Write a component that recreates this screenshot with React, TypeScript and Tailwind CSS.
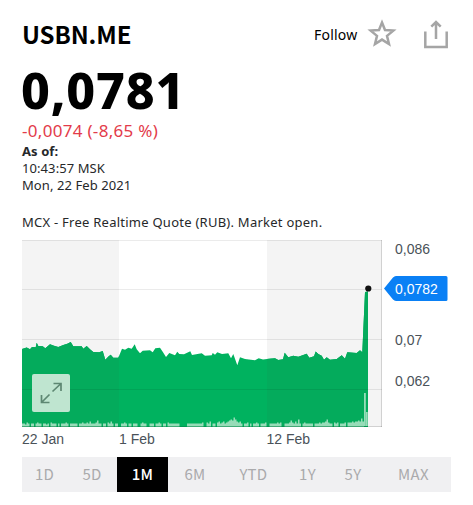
const ranges = [
  { label: '1D', style: 'w-[45px]' },
  { label: '5D', style: 'w-[50px]' },
  { label: '1M', style: 'w-[51px]' },
  { label: '6M', style: 'w-[54px]' },
  { label: 'YTD', style: 'w-[63px]' },
  { label: '1Y', style: 'w-[45px]' },
  { label: '5Y', style: 'w-[46px]' },
  { label: 'MAX', style: 'w-[75px]' },
];

const outline =
  '22,349 26.7,347.5 30,349.3 32,347 35.7,347.3 36.7,342.7 38.3,346 42.7,346.3 45.3,348.3 50,344.3 54,345.7 58.3,347 63.3,345 67.3,343.7 70.7,342 73.3,346.3 81.7,346.3 83.3,348.7 86.7,346 90,349.3 93.3,352 99.3,352.3 102.7,351 105.3,359.7 108.7,356.3 110.7,354.7 113.3,357.7 118.3,357.7 122,348.7 125,349.7 128.3,347.7 131.7,348.7 134.7,344.3 136.7,349.3 140,353.3 142.7,350.7 150,350.3 152.7,352.3 155.3,348.3 160,347.7 162.7,351.7 166,357 169.3,353 175,355.3 177.3,351.7 179.3,354 184,354.3 190.3,351.3 192,355 201.7,353.3 205,355.7 211.7,355.3 212.7,353 215,354.7 217.3,352.3 222,354 228.3,353.3 231,358.3 233.3,354 237.3,365.3 240,357.3 245,359 255,360.3 258.7,358.3 263,359.5 269,358.7 275,358.3 278.3,360 283,359.3 284.7,352.7 288.3,357.3 293.3,355.7 298.3,356.7 306.7,353.7 309.3,357.7 314,356.3 315.7,351.5 318.3,354 321.7,355.7 324,359.7 326.7,357.3 330,359.7 336.7,359 341.7,355.3 345,358.7 347.3,352.3 356.7,353 360,350.3 362.3,352.3 365,292 368,291.5';

// trading volume, one bar every 1.5px
const volume = [
  3, 3, 2, 4, 3, 0, 3, 3, 0, 3, 4, 3, 3, 0, 3, 3, 2, 3, 0, 4, 3, 3, 3, 0, 3, 0, 3, 3, 3, 4, 3, 0, 3, 3, 3, 3, 3, 0,
  3, 3, 4, 3, 3, 4, 3, 5, 3, 3, 3, 4, 6, 3, 3, 0, 3, 3, 0, 4, 3, 5, 3, 0, 3, 3, 0, 0, 3, 3, 4, 3, 0, 3, 3, 0, 3, 3,
  3, 0, 0, 3, 4, 3, 3, 0, 0, 3, 3, 3, 0, 3, 3, 4, 3, 0, 3, 3, 0, 4, 3, 3, 3, 3, 3, 3, 3, 0, 0, 0, 0, 0, 3, 3, 3, 3,
  3, 3, 3, 3, 3, 3, 4, 0, 0, 4, 3, 5, 0, 3, 3, 0, 4, 5, 3, 4, 5, 3, 4, 5, 6, 7, 6, 9, 7, 5, 4, 5, 3, 0, 3, 3, 4, 0,
  3, 0, 3, 3, 4, 3, 0, 3, 3, 3, 4, 0, 0, 3, 3, 3, 3, 3, 4, 3, 4, 0, 0, 3, 3, 3, 4, 6, 4, 3, 5, 3, 7, 3, 0, 3, 4, 3,
  3, 3, 3, 3, 0, 3, 3, 3, 4, 3, 4, 4, 5, 7, 4, 3, 3, 0, 4, 3, 4, 0, 3, 3, 3, 4, 0, 4, 4, 4, 5, 4, 5, 5, 6, 5, 8, 5,
];

const volumePath = 'M22 426.5' + volume.map((v) => `V${426.5 - v}h1.5`).join('') + 'V426.5Z';

function Chart() {
  return (
    <svg
      viewBox="22 236 440 214"
      className="block h-[214px] w-[440px] font-['Liberation_Sans',sans-serif]"
      fontSize="14"
      fill="#4a5259"
    >
      <clipPath id="area">
        <polygon points={`22,427 ${outline} 368,427`} />
      </clipPath>
      <rect x="22" y="240" width="97" height="187" fill="#f4f4f4" />
      <rect x="267" y="240" width="115" height="187" fill="#f4f4f4" />
      <g clipPath="url(#area)">
        <rect x="22" y="240" width="360" height="187" fill="#00b25f" />
        <rect x="22" y="240" width="97" height="187" fill="#04ab5c" />
        <rect x="267" y="240" width="115" height="187" fill="#04ab5c" />
      </g>
      <g fill="#97dcb8">
        <path d={volumePath} />
        <rect x="364" y="393" width="1.8" height="33" />
        <rect x="366" y="412" width="1.7" height="14" />
      </g>
      <g stroke="#000">
        <path d="M22 240.5H382M22 289.5H382M22 339.5H382M22 389.5H382" strokeOpacity="0.08" />
        <path d="M22 426.5H382M381.5 240V427" strokeOpacity="0.14" />
      </g>
      <circle cx="368.3" cy="288.5" r="3.1" fill="#111" />

      <text x="395" y="254">0,086</text>
      <text x="395" y="345">0,07</text>
      <text x="395" y="386">0,062</text>
      <path d="M384 288.5L393 277.6Q394.3 276 396 276H446Q447.5 276 447.5 277.5V299.5Q447.5 301 446 301H396Q394.3 301 393 299.6Z" fill="#0a80f5" />
      <text x="395" y="294" fill="#fff">0,0782</text>

      <text x="22" y="444">22 Jan</text>
      <text x="119" y="444">1 Feb</text>
      <text x="266.5" y="444">12 Feb</text>

      <rect x="32" y="374" width="38" height="38" rx="2" fill="#bfe5d0" />
      <g stroke="#5d8772" strokeWidth="1.7" fill="none">
        <path d="M52.5 391.5L61 383.5M53.5 383.5H61V391M49.5 394.5L41.5 402.5M41.5 395V402.5H49.5" />
      </g>
    </svg>
  );
}

export default function App() {
  return (
    <div className="h-[505px] w-[473px] overflow-hidden bg-white pl-[22px] font-['Noto_Sans',sans-serif] text-[#26282a]">
      <header className="flex h-[68px] items-center">
        <h1 className="w-[292px] font-['Noto_Sans_CJK_SC',sans-serif] text-[24px] leading-[30px] font-bold tracking-[-0.1px] text-black">
          USBN.ME
        </h1>
        <button className="flex items-center text-[14px] text-black">
          <span className="w-[53px] text-left tracking-[0.2px]">Follow</span>
          <svg className="h-[32px] w-[32px]" viewBox="0 0 32 32" fill="none" stroke="#a5a5a5" strokeWidth="2.5">
            <path d="M15 4.5L18 12L26.4 12.6L20 17.9L22 26L15 21.6L8 26L10 17.9L3.6 12.6L12 12Z" />
          </svg>
        </button>
        <button className="ml-[24px]">
          <svg className="h-[32px] w-[26px]" viewBox="0 0 26 32" fill="none" stroke="#a5a5a5" strokeWidth="2.5">
            <path d="M2.3 13.5V28.9H23.7V13.5M13 21V4M8.3 8.7L13 4L17.7 8.7" />
          </svg>
        </button>
      </header>

      <div className="-ml-px h-[54px] text-[50px] leading-[44px] font-extrabold tracking-[0.8px] text-black">0,0781</div>
      <div className="text-[17px] leading-[18px] tracking-[0.3px] text-[#e33b4a]">-0,0074 (-8,65 %)</div>
      <div className="mt-[3px] text-[13px] leading-[17px] tracking-[0.08px]">
        <p className="font-bold">As of:</p>
        <p>10:43:57 MSK</p>
        <p>Mon, 22 Feb 2021</p>
      </div>
      <p className="mt-[19px] mb-[4px] text-[13px] leading-[19px] tracking-[0.25px]">
        MCX - Free Realtime Quote (RUB). Market open.
      </p>

      <Chart />

      <nav className="mt-[7px] flex h-[35px] w-[429px] bg-[#f0f0f2] font-['Noto_Sans_CJK_SC',sans-serif] text-[15px] tracking-[0.3px] text-[#aaaaac]">
        {ranges.map((r) => (
          <button key={r.label} className={`${r.style} ${r.label === '1M' ? 'bg-black font-medium text-white' : ''}`}>
            {r.label}
          </button>
        ))}
      </nav>
    </div>
  );
}
